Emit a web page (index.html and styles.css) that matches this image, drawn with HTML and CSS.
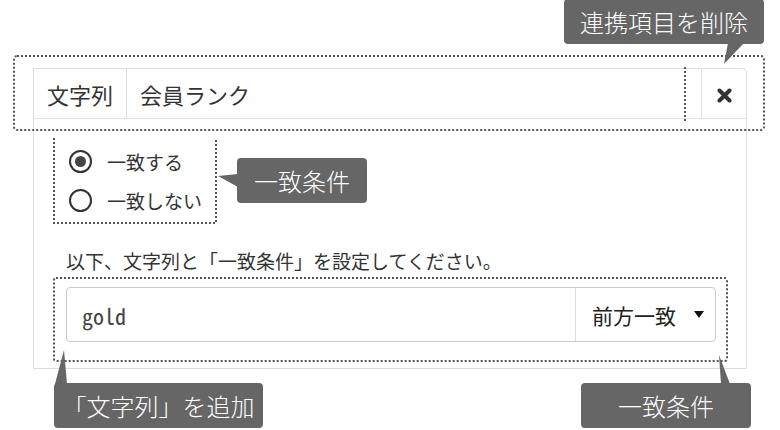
FILE: index.html
```html
<!DOCTYPE html>
<html lang="ja">
<head>
    <meta charset="UTF-8">
    <title>連携項目</title>
    <link rel="stylesheet" href="styles.css">
</head>
<body>
    <div class="stage">
        <div class="card">
            <div class="head">
                <div class="type">文字列</div>
                <div class="name">会員ランク</div>
                <div class="remove">
                    <svg width="15" height="15" viewBox="0 0 15 15"><path d="M2.5 2.5L12.5 12.5M12.5 2.5L2.5 12.5" stroke="#333" stroke-width="4" stroke-linecap="round"/></svg>
                </div>
            </div>
            <div class="body">
                <div class="choices">
                    <label class="choice"><span class="radio checked"></span>一致する</label>
                    <label class="choice"><span class="radio"></span>一致しない</label>
                </div>
                <p class="hint">以下、文字列と「一致条件」を設定してください。</p>
                <div class="query">
                    <div class="value">gold</div>
                    <div class="match">前方一致<span class="caret"></span></div>
                </div>
            </div>
        </div>

        <!-- highlight frames and callout pointers -->
        <svg class="overlay" width="780" height="430">
            <g class="dotted">
                <rect x="14" y="56" width="750" height="74" rx="3"/>
                <path d="M685 67V123"/>
                <path d="M54 138V223H216V138"/>
                <rect x="54" y="278" width="673" height="83" rx="2"/>
            </g>
            <g class="pointer">
                <polygon points="724,64 728,43 744,43"/>
                <polygon points="218,176 238,174 238,187"/>
                <polygon points="64,350 67,384 55,384"/>
                <polygon points="719,355 721,384 730,384"/>
            </g>
        </svg>

        <div class="tip tip-remove">連携項目を削除</div>
        <div class="tip tip-cond">一致条件</div>
        <div class="tip tip-add">「文字列」を追加</div>
        <div class="tip tip-match">一致条件</div>
    </div>
</body>
</html>
```

FILE: styles.css
```css
body {
    margin: 0;
    font-family: "Noto Sans CJK JP", "Noto Sans", sans-serif;
    color: #333;
    background: #fff;
}
.stage {
    position: relative;
    width: 780px;
    height: 430px;
    overflow: hidden;
}
.card {
    box-sizing: border-box;
    width: 714px;
    margin: 68px 0 0 33px;
    border: 1px solid #ddd;
    border-radius: 0 5px 0 0;
}
.head {
    box-sizing: border-box;
    display: flex;
    height: 50px;
    border-bottom: 1px solid #e2e2e2;
    font-size: 22px;
}
.type {
    box-sizing: border-box;
    width: 93px;
    padding-left: 13px;
    border-right: 1px solid #ddd;
    display: flex;
    align-items: center;
}
.name {
    flex: 1;
    padding-left: 13px;
    display: flex;
    align-items: center;
}
.remove {
    box-sizing: border-box;
    width: 45px;
    border-left: 1px solid #ddd;
    display: flex;
    align-items: center;
    justify-content: center;
    padding-top: 3px;
}
.body {
    padding: 23px 30px 26px 32px;
}
.choices {
    margin-left: 3px;
}
.choice {
    display: flex;
    align-items: center;
    gap: 15px;
    height: 39px;
    font-size: 19px;
}
.radio {
    box-sizing: border-box;
    width: 23px;
    height: 23px;
    border: 2px solid #333;
    border-radius: 50%;
    display: flex;
    align-items: center;
    justify-content: center;
}
.radio.checked::after {
    content: "";
    width: 11px;
    height: 11px;
    border-radius: 50%;
    background: #444;
}
.hint {
    margin: 28px 0 0;
    font-size: 19px;
    line-height: 26px;
}
.query {
    box-sizing: border-box;
    display: flex;
    height: 55px;
    margin-top: 13px;
    border: 1px solid #ccc;
    border-radius: 4px;
}
.value {
    flex: 1;
    padding-left: 15px;
    display: flex;
    align-items: center;
    font-family: "Noto Sans Mono CJK JP", "DejaVu Sans Mono", monospace;
    font-size: 22px;
    color: #444;
}
.match {
    display: flex;
    align-items: center;
    padding: 0 11px 0 16px;
    border-left: 1px solid #ddd;
    font-size: 21px;
    color: #222;
}
.caret {
    margin-left: 18px;
    border-left: 5px solid transparent;
    border-right: 5px solid transparent;
    border-top: 7px solid #111;
}
.overlay {
    position: absolute;
    left: 0;
    top: 0;
}
.dotted {
    fill: none;
    stroke: #555;
    stroke-width: 2;
    stroke-dasharray: 2 2;
}
.pointer {
    fill: #666;
}
.tip {
    position: absolute;
    height: 45px;
    line-height: 45px;
    background: #666;
    color: #fff;
    font-size: 24px;
    font-weight: 300;
    text-align: center;
    border-radius: 4px;
}
.tip-remove {
    left: 564px;
    top: -1px;
    width: 200px;
}
.tip-cond {
    left: 237px;
    top: 158px;
    width: 130px;
}
.tip-add {
    left: 54px;
    top: 383px;
    width: 209px;
}
.tip-match {
    left: 581px;
    top: 383px;
    width: 170px;
}
```
